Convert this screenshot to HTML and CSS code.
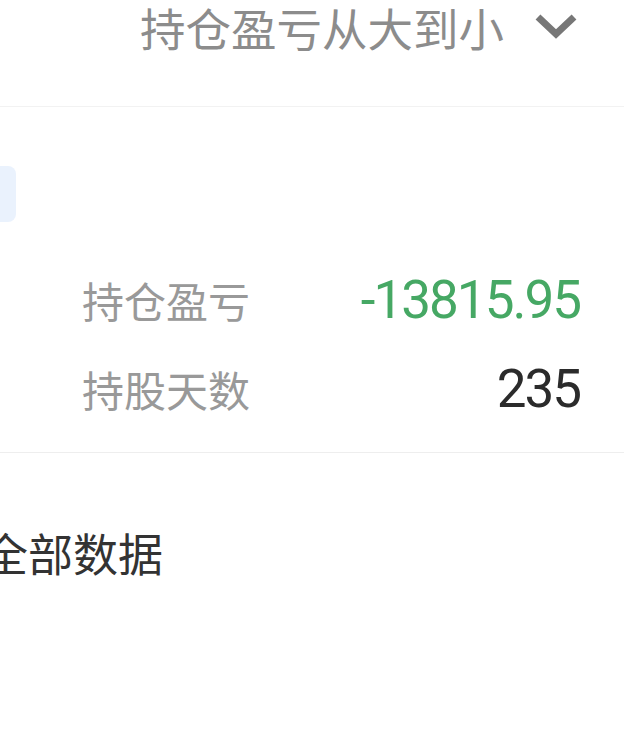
FILE: index.html
```html
<!DOCTYPE html>
<html lang="zh-CN">
<head>
  <meta charset="UTF-8">
  <title>持仓</title>
  <link rel="stylesheet" href="styles.css">
</head>
<body>
  <div class="page">
    <div class="sort-bar">
      <span class="sort-label">持仓盈亏从大到小</span>
      <svg class="chevron" width="44" height="28" viewBox="0 0 44 28">
        <path d="M4 5 L22 22 L40 5" fill="none" stroke="#777" stroke-width="7"/>
      </svg>
    </div>

    <div class="card">
      <div class="tag"></div>
      <div class="stats">
        <div class="stat-row">
          <span class="stat-name">持仓盈亏</span>
          <span class="stat-value loss">-13815.95</span>
        </div>
        <div class="stat-row">
          <span class="stat-name">持股天数</span>
          <span class="stat-value">235</span>
        </div>
      </div>
    </div>

    <div class="all-data">全部数据</div>
  </div>
</body>
</html>
```

FILE: styles.css
```css
* {
  box-sizing: border-box;
}

body {
  margin: 0;
  background: #fff;
  font-family: "Noto Sans CJK SC", "Noto Sans", sans-serif;
  overflow: hidden;
}

.page {
  width: 624px;
}

.sort-bar {
  height: 107px;
  display: flex;
  justify-content: flex-end;
  align-items: flex-start;
  padding: 0 46px 0 0;
  border-bottom: 1px solid #f2f2f2;
}

.sort-label {
  font-size: 45.5px;
  line-height: 54px;
  color: #8c8c8c;
}

.chevron {
  margin: 12px 0 0 30px;
}

.card {
  border-bottom: 1px solid #eeeeee;
  padding: 59px 44px 19px 0;
}

.tag {
  width: 30px;
  height: 56px;
  margin-left: -14px;
  background: #eaf2fd;
  border-radius: 8px;
}

.stats {
  margin-top: 33px;
  padding-left: 82px;
}

.stat-row {
  display: flex;
  justify-content: space-between;
  align-items: center;
  height: 89px;
}

.stat-name {
  font-size: 42px;
  color: #999;
}

.stat-value {
  font-family: Roboto, "Noto Sans", sans-serif;
  font-size: 53px;
  letter-spacing: -2px;
  color: #2b2b2b;
}

.loss {
  color: #46a864;
}

.all-data {
  margin: 67px 0 0 -17px;
  font-size: 45px;
  color: #333;
}
```
